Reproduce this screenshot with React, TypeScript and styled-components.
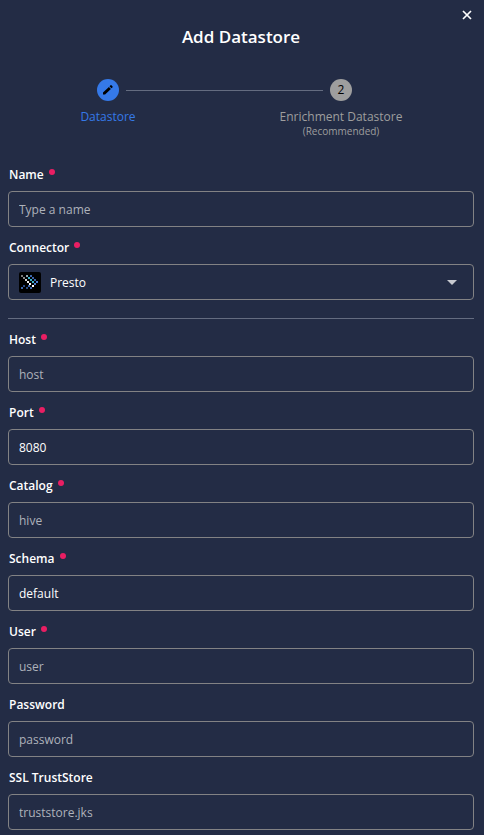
import React from "react";
import styled, { createGlobalStyle } from "styled-components";

const colors = {
  page: "#232c45",
  accent: "#3579e8",
  muted: "#9e9e9e",
  border: "#828284",
  rule: "#646c80",
  required: "#e91e63",
  placeholder: "#aeb2bb",
};

const GlobalStyle = createGlobalStyle`
  *, *::before, *::after { box-sizing: border-box; }
  body {
    margin: 0;
    background: ${colors.page};
    color: #fff;
    font-family: "Segoe UI", "Open Sans", "Noto Sans", sans-serif;
    font-size: 12px;
    line-height: 18px;
  }
`;

const Dialog = styled.main`
  display: flex;
  flex-direction: column;
  padding: 5px 10px 5px 8px;
`;

const CloseButton = styled.button`
  align-self: flex-end;
  display: flex;
  align-items: center;
  justify-content: center;
  width: 20px;
  height: 20px;
  margin-right: -3px;
  padding: 0;
  border: 0;
  background: none;
  color: #fff;
  cursor: pointer;
`;

const Title = styled.h1`
  margin: 0;
  font-size: 17px;
  font-weight: 600;
  line-height: 24px;
  text-align: center;
`;

const Stepper = styled.ol`
  display: grid;
  grid-template-columns: 36px 1fr 36px;
  height: 87px;
  margin: 30px 0 0;
  padding: 0 115px 0 82px;
  list-style: none;
`;

const Step = styled.li<{ $active?: boolean }>`
  display: flex;
  flex-direction: column;
  align-items: center;
  line-height: 16px;
  white-space: nowrap;
  color: ${(p) => (p.$active ? colors.accent : colors.muted)};
`;

const StepMark = styled.span<{ $active?: boolean }>`
  display: flex;
  align-items: center;
  justify-content: center;
  flex: none;
  width: 22px;
  height: 22px;
  margin-bottom: 8px;
  border-radius: 50%;
  background: ${(p) => (p.$active ? colors.accent : colors.muted)};
  color: #000;
`;

const StepHint = styled.small`
  font-size: 10px;
  line-height: 12px;
`;

const StepLine = styled.li`
  height: 1px;
  margin-top: 11px;
  background: ${colors.rule};
`;

const Form = styled.form`
  display: flex;
  flex-direction: column;
  gap: 12px;
`;

const Field = styled.div`
  display: flex;
  flex-direction: column;
  gap: 7px;
`;

const Label = styled.label`
  display: flex;
  gap: 5px;
  padding: 0 1px;
  font-weight: 600;
`;

const RequiredDot = styled.span`
  width: 6px;
  height: 6px;
  margin-top: 3px;
  border-radius: 50%;
  background: ${colors.required};
`;

const Input = styled.input`
  width: 100%;
  height: 36px;
  padding: 0 10px;
  border: 1px solid ${colors.border};
  border-radius: 4px;
  background: transparent;
  color: #fff;
  font: inherit;
  outline: none;
  &::placeholder { color: ${colors.placeholder}; opacity: 1; }
  &:focus { border-color: ${colors.accent}; }
`;

const SelectBox = styled.div`
  display: grid;
  grid-template-columns: 22px 1fr 10px;
  align-items: center;
  height: 36px;
  padding: 0 16px 0 10px;
  border: 1px solid ${colors.border};
  border-radius: 4px;
`;

const Select = styled.select`
  appearance: none;
  height: 34px;
  padding: 2px 9px 0;
  border: 0;
  background: transparent;
  color: #fff;
  font: inherit;
  outline: none;
`;

const Divider = styled.hr`
  width: 100%;
  height: 1px;
  margin: 6px 0 0;
  border: 0;
  background: ${colors.rule};
`;

const logoDots: [number, number, string][] = [
  [2, 3, "#777"], [7, 3, "#8fa3ad"], [11, 3, "#3d64a8"],
  [4, 5, "#888"], [9, 5, "#38b6cf"], [13, 5, "#3d64a8"],
  [6, 7, "#ccc"], [11, 7, "#38b6cf"], [15, 7, "#3d64a8"],
  [8, 9, "#eee"], [13, 9, "#38b6cf"], [17, 9, "#4b7ad0"],
  [10, 11, "#fff"], [15, 11, "#4b7ad0"],
  [4, 13, "#294a84"], [9, 13, "#3d64a8"], [13, 13, "#fff"],
  [2, 15, "#3d64a8"], [7, 15, "#294a84"], [11, 15, "#3d64a8"],
];

const PrestoLogo = () => (
  <svg width="22" height="21" viewBox="0 0 22 21" aria-hidden="true">
    <rect width="22" height="21" rx="2" fill="#000" />
    {logoDots.map(([x, y, fill]) => (
      <rect key={`${x}-${y}`} x={x} y={y} width="2" height="2" fill={fill} />
    ))}
  </svg>
);

type TextFieldProps = {
  id: string;
  label: string;
  required?: boolean;
  placeholder?: string;
  value?: string;
  type?: string;
};

const FieldLabel = ({ id, label, required }: TextFieldProps) => (
  <Label htmlFor={id}>
    {label}
    {required && <RequiredDot />}
  </Label>
);

const TextField = (props: TextFieldProps) => (
  <Field>
    <FieldLabel {...props} />
    <Input
      id={props.id}
      type={props.type ?? "text"}
      required={props.required}
      placeholder={props.placeholder}
      defaultValue={props.value}
    />
  </Field>
);

const connectionFields: TextFieldProps[] = [
  { id: "host", label: "Host", required: true, placeholder: "host" },
  { id: "port", label: "Port", required: true, value: "8080" },
  { id: "catalog", label: "Catalog", required: true, placeholder: "hive" },
  { id: "schema", label: "Schema", required: true, value: "default" },
  { id: "user", label: "User", required: true, placeholder: "user" },
  { id: "password", label: "Password", placeholder: "password", type: "password" },
  { id: "truststore", label: "SSL TrustStore", placeholder: "truststore.jks" },
];

export default function App() {
  return (
    <>
      <GlobalStyle />
      <Dialog>
        <CloseButton type="button" aria-label="Close">
          <svg width="10" height="10" viewBox="0 0 10 10" stroke="currentColor" strokeWidth="1.7">
            <path d="M1 1 9 9M9 1 1 9" />
          </svg>
        </CloseButton>
        <Title>Add Datastore</Title>
        <Stepper>
          <Step $active aria-current="step">
            <StepMark $active>
              <svg width="14" height="14" viewBox="0 0 14 14" fill="currentColor" aria-hidden="true">
                <path d="M2 9.600 7.900 3.900 9.900 5.900 4.100 11.500H2zM8.500 3.300 9.600 2.200Q10 1.900 10.400 2.200L11.600 3.400Q11.900 3.800 11.600 4.200L10.500 5.300z" />
              </svg>
            </StepMark>
            Datastore
          </Step>
          <StepLine role="presentation" />
          <Step>
            <StepMark>2</StepMark>
            Enrichment Datastore
            <StepHint>(Recommended)</StepHint>
          </Step>
        </Stepper>
        <Form>
          <TextField id="name" label="Name" required placeholder="Type a name" />
          <Field>
            <FieldLabel id="connector" label="Connector" required />
            <SelectBox>
              <PrestoLogo />
              <Select id="connector" defaultValue="presto">
                <option value="presto">Presto</option>
              </Select>
              <svg width="10" height="5" viewBox="0 0 10 5" aria-hidden="true">
                <path d="M0 0h10L5 5z" fill="#c8cad0" />
              </svg>
            </SelectBox>
          </Field>
          <Divider />
          {connectionFields.map((field) => (
            <TextField key={field.id} {...field} />
          ))}
        </Form>
      </Dialog>
    </>
  );
}
